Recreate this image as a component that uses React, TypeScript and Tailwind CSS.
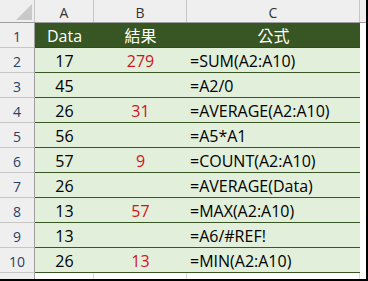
const rows: [string, string, string][] = [
  ["17", "279", "=SUM(A2:A10)"],
  ["45", "", "=A2/0"],
  ["26", "31", "=AVERAGE(A2:A10)"],
  ["56", "", "=A5*A1"],
  ["57", "9", "=COUNT(A2:A10)"],
  ["26", "", "=AVERAGE(Data)"],
  ["13", "57", "=MAX(A2:A10)"],
  ["13", "", "=A6/#REF!"],
  ["26", "13", "=MIN(A2:A10)"],
];

const font = { fontFamily: '"Open Sans", "Noto Sans CJK TC", sans-serif' };

function RowNum({ n }: { n: number }) {
  return (
    <div className="flex h-[25px] w-[35px] items-center justify-center border-r border-b border-r-[#9e9e9e] border-b-[#c6c6c6] bg-[#efefef] pt-[3px] text-[14px] text-[#2b3f63]">
      {n}
    </div>
  );
}

export default function App() {
  return (
    <div
      className="h-[281px] w-[368px] overflow-hidden border-r-2 border-b-2 border-black bg-white"
      style={font}
    >
      {/* column headers */}
      <div className="flex h-[23px] border-b border-[#9e9e9e] bg-[#efefef] text-[14px] text-[#333]">
        <div className="relative h-full w-[35px] border-r border-[#c6c6c6]">
          <svg className="absolute right-[2px] bottom-[2px]" width="16" height="16">
            <polygon points="16,0 16,16 0,16" fill="#c9c9c9" />
          </svg>
        </div>
        <div className="flex w-[59px] items-center justify-center border-r border-[#c6c6c6] pt-[2px]">A</div>
        <div className="flex w-[93px] items-center justify-center border-r border-[#c6c6c6] pt-[2px]">B</div>
        <div className="flex w-[173px] items-center justify-center border-r border-[#c6c6c6] pt-[2px]">C</div>
        <div className="flex-1" />
      </div>

      {/* header data row */}
      <div className="flex">
        <RowNum n={1} />
        <div className="flex h-[25px] w-[325px] border-b border-[#2f4a1d] bg-[#375623] pt-[2px] text-[16px] text-white">
          <div className="flex w-[59px] items-center justify-center">Data</div>
          <div className="flex w-[93px] items-center justify-center">結果</div>
          <div className="flex w-[173px] items-center justify-center">公式</div>
        </div>
        <div className="h-[25px] flex-1" />
      </div>

      {rows.map((r, i) => (
        <div key={i} className="flex">
          <RowNum n={i + 2} />
          <div className="flex h-[25px] w-[325px] border-b border-[#375623] bg-[#e2efda] pt-[2px] text-[16px] text-black">
            <div className="flex w-[59px] items-center justify-center">{r[0]}</div>
            <div className="flex w-[93px] items-center justify-center text-[#d0141e]">{r[1]}</div>
            <div className="flex w-[173px] items-center whitespace-nowrap pl-[3px]">{r[2]}</div>
          </div>
          <div className="h-[25px] flex-1" />
        </div>
      ))}

      {/* blank row remainder */}
      <div className="flex h-[10px]">
        <div className="w-[35px] border-r border-[#9e9e9e] bg-[#efefef]" />
        <div className="w-[59px] border-r border-[#d9d9d9]" />
        <div className="w-[93px] border-r border-[#d9d9d9]" />
        <div className="w-[173px] border-r border-[#d9d9d9]" />
      </div>
    </div>
  );
}
